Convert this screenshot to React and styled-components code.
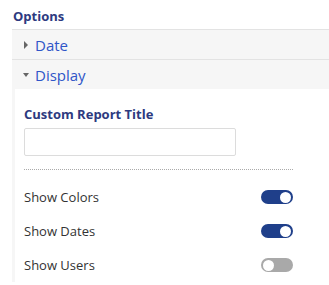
import React, { useState } from "react";
import styled, { createGlobalStyle } from "styled-components";

const GlobalStyle = createGlobalStyle`
  body {
    margin: 0;
    background: #ffffff;
    font-family: "Open Sans", "Liberation Sans", sans-serif;
  }
`;

const Wrapper = styled.div`
  padding: 6px 0 0 12px;
`;

const Title = styled.div`
  font-size: 13px;
  font-weight: 700;
  color: #2d3a80;
  padding-left: 1px;
  height: 23px;
  line-height: 20px;
`;

const Section = styled.div`
  border-top: 1px solid #e3e3e3;
`;

const SectionHeader = styled.div`
  display: flex;
  align-items: center;
  height: 29px;
  background: #f6f6f6;
  padding-left: 10px;
  gap: 5px;
  font-size: 15px;
  color: #2f55c8;
  cursor: pointer;
`;

const CaretBox = styled.span`
  display: flex;
  align-items: center;
  justify-content: center;
  width: 8px;
`;

const Caret = styled.span`
  width: 0;
  height: 0;
  ${({ $open }) =>
    $open
      ? `border-left: 3.5px solid transparent;
         border-right: 3.5px solid transparent;
         border-top: 4px solid #666;
         margin-top: 1px;`
      : `border-top: 4px solid transparent;
         border-bottom: 4px solid transparent;
         border-left: 4px solid #666;`}
`;

const Body = styled.div`
  border-left: 3px solid #f6f6f6;
  padding: 15px 36px 0 9px;
`;

const Label = styled.div`
  font-size: 13px;
  font-weight: 700;
  color: #2d3a80;
  line-height: 20px;
  margin-bottom: 4px;
`;

const TextInput = styled.input`
  display: block;
  box-sizing: border-box;
  width: 212px;
  height: 28px;
  border: 1px solid #dcdcdc;
  border-radius: 2px;
  outline: none;
`;

const Divider = styled.div`
  border-top: 1px dotted #aaaaaa;
  margin: 13px 0 10px;
`;

const OptionRow = styled.div`
  display: flex;
  align-items: center;
  justify-content: space-between;
  height: 34px;
  font-size: 13px;
  color: #333;
`;

const Toggle = styled.button`
  position: relative;
  width: 32px;
  height: 14px;
  border: none;
  padding: 0;
  border-radius: 7px;
  background: ${({ $on }) => ($on ? "#1f3f8a" : "#a9a9a9")};
  cursor: pointer;

  &::after {
    content: "";
    position: absolute;
    top: 1.5px;
    left: ${({ $on }) => ($on ? "19px" : "1.5px")};
    width: 11px;
    height: 11px;
    border-radius: 50%;
    background: #fff;
  }
`;

function App() {
  const [opts, setOpts] = useState({
    "Show Colors": true,
    "Show Dates": true,
    "Show Users": false,
  });

  return (
    <>
      <GlobalStyle />
      <Wrapper>
        <Title>Options</Title>
        <Section>
          <SectionHeader>
            <CaretBox>
              <Caret />
            </CaretBox>
            Date
          </SectionHeader>
        </Section>
        <Section>
          <SectionHeader>
            <CaretBox>
              <Caret $open />
            </CaretBox>
            Display
          </SectionHeader>
        </Section>
        <Body>
          <Label>Custom Report Title</Label>
          <TextInput type="text" />
          <Divider />
          {Object.keys(opts).map((name) => (
            <OptionRow key={name}>
              {name}
              <Toggle
                $on={opts[name]}
                onClick={() => setOpts({ ...opts, [name]: !opts[name] })}
              />
            </OptionRow>
          ))}
        </Body>
      </Wrapper>
    </>
  );
}

export default App;
